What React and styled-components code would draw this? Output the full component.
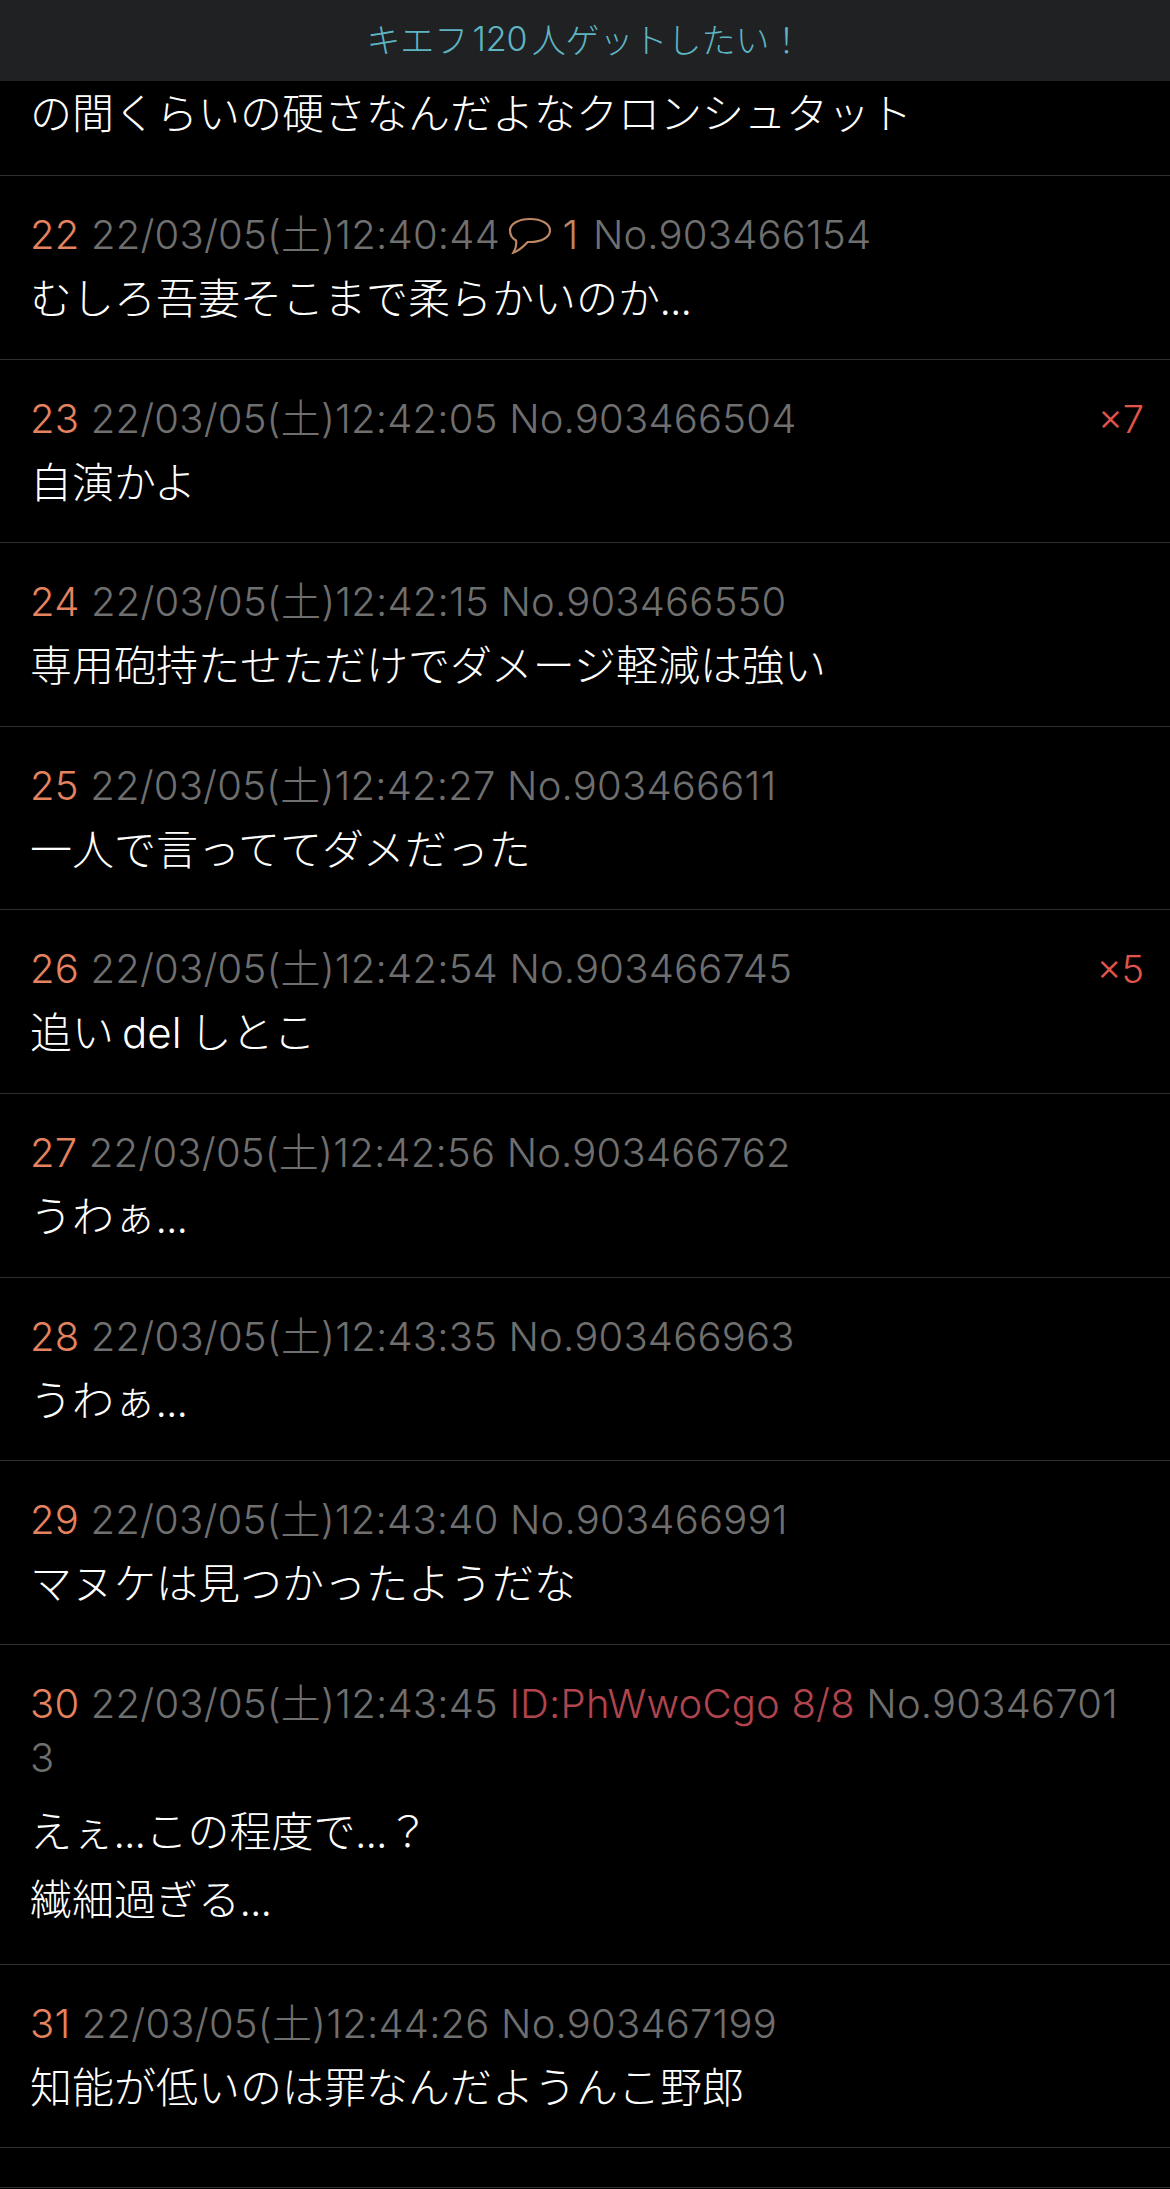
import React from "react";
import styled, { createGlobalStyle } from "styled-components";

const GlobalStyle = createGlobalStyle`
  html, body {
    margin: 0;
    padding: 0;
    background: #000;
  }
  body {
    font-family: "Noto Sans CJK JP", "Noto Sans", sans-serif;
  }
`;

const Page = styled.div`
  width: 1170px;
  height: 2189px;
  overflow: hidden;
  background: #000;
`;

const Header = styled.header`
  display: flex;
  align-items: center;
  justify-content: center;
  box-sizing: border-box;
  height: 81px;
  padding-bottom: 5px;
  background: #1f2123;
  color: #5fb4c2;
  font-size: 34px;
  font-weight: 300;
  font-family: Inter, "Noto Sans CJK JP", sans-serif;
`;

const HeaderNum = styled.span`
  margin: 0 4px;
`;

const Body = styled.div`
  margin-top: ${(p) => (p.$tall ? "10px" : "0")};
  margin-bottom: ${(p) => (p.$tall ? "4.4px" : "0")};
  font-size: 42px;
  font-weight: 300;
  line-height: 68px;
  color: #fff;
`;

const Row = styled.article`
  position: relative;
  padding: 32px 30px 28.6px;
  border-bottom: 1px solid #2e2e2e;
`;

const ClippedRow = styled(Row)`
  padding: 0 30px 34px;

  ${Body} {
    line-height: 60px;
  }
`;

const EmptyRow = styled.div`
  height: 39px;
  border-bottom: 1px solid #2e2e2e;
`;

const Meta = styled.div`
  padding-right: 10px;
  font-family: Inter, "Noto Sans CJK JP", sans-serif;
  font-size: 40px;
  font-weight: 300;
  letter-spacing: 0.2px;
  line-height: 54px;
  color: #6f6f6f;
  word-break: break-all;
`;

const Num = styled.span`
  color: #e5835f;
`;

const Id = styled.span`
  color: #b0444f;
`;

const ReplyCount = styled.span`
  padding-right: 3px;
  color: #bd8763;
`;

const ReplyIcon = styled.svg`
  width: 44px;
  height: 37px;
  vertical-align: -5px;
  margin: 0 10px 0 -3px;
`;

const Latin = styled.span`
  font-family: Inter, sans-serif;
  line-height: 1;
  margin: 0 8px;
`;

const Ref = styled.span`
  position: absolute;
  top: 32px;
  right: 26px;
  font-family: Inter, sans-serif;
  font-size: 38px;
  font-weight: 300;
  line-height: 54px;
  color: #e0544a;
`;

const posts = [
  { n: 22, time: "12:40:44", no: "903466154", text: "むしろ吾妻そこまで柔らかいのか...", replies: 1 },
  { n: 23, time: "12:42:05", no: "903466504", text: "自演かよ", ref: "×7" },
  { n: 24, time: "12:42:15", no: "903466550", text: "専用砲持たせただけでダメージ軽減は強い" },
  { n: 25, time: "12:42:27", no: "903466611", text: "一人で言っててダメだった" },
  { n: 26, time: "12:42:54", no: "903466745", text: <>追い<Latin>del</Latin>しとこ</>, ref: "×5" },
  { n: 27, time: "12:42:56", no: "903466762", text: "うわぁ..." },
  { n: 28, time: "12:43:35", no: "903466963", text: "うわぁ..." },
  { n: 29, time: "12:43:40", no: "903466991", text: "マヌケは見つかったようだな" },
  {
    n: 30,
    time: "12:43:45",
    no: "903467013",
    id: "ID:PhWwoCgo 8/8",
    text: <>えぇ...この程度で...？<br />繊細過ぎる...</>,
    tall: true,
  },
  { n: 31, time: "12:44:26", no: "903467199", text: "知能が低いのは罪なんだようんこ野郎" },
];

function Bubble() {
  return (
    <ReplyIcon viewBox="0 0 44 37" fill="none" stroke="#bd8763" strokeWidth="2.2">
      <path d="M8 23.500C3.500 21 2 17.500 2 13.500 2 7 10.500 2 22 2c11.500 0 20 5 20 11.500S33.500 25 22 25h-2.300C16 29 10 34 5.300 35.700 7.500 32 8.800 27 8 23.500Z" />
    </ReplyIcon>
  );
}

function Post({ post }) {
  return (
    <Row>
      <Meta>
        <Num>{post.n}</Num> 22/03/05(土){post.time}{" "}
        {post.replies && (
          <ReplyCount>
            <Bubble />
            {post.replies}{" "}
          </ReplyCount>
        )}
        {post.id && <Id>{post.id} </Id>}
        No.{post.no}
      </Meta>
      <Body $tall={post.tall}>{post.text}</Body>
      {post.ref && <Ref>{post.ref}</Ref>}
    </Row>
  );
}

export default function App() {
  return (
    <Page>
      <GlobalStyle />
      <Header>キエフ<HeaderNum>120</HeaderNum>人ゲットしたい！</Header>
      <ClippedRow>
        <Body>の間くらいの硬さなんだよなクロンシュタット</Body>
      </ClippedRow>
      {posts.map((post) => (
        <Post key={post.n} post={post} />
      ))}
      <EmptyRow />
    </Page>
  );
}
